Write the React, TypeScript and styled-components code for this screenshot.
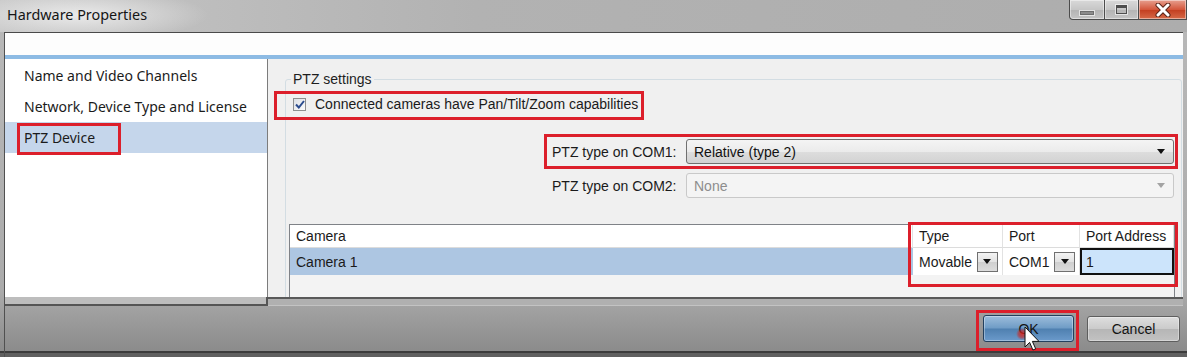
import styled, { createGlobalStyle } from "styled-components";

const GlobalStyle = createGlobalStyle`
  html, body {
    margin: 0;
    padding: 0;
    background: #5e5e5e;
  }
  * {
    box-sizing: border-box;
  }
`;

const UI_FONT = `"Liberation Sans", Arial, sans-serif`;
const SEGOE = `"Noto Sans", "Open Sans", sans-serif`;

const Window = styled.div`
  position: relative;
  width: 1187px;
  height: 357px;
  overflow: hidden;
  display: flex;
  flex-direction: column;
  background: linear-gradient(
    to bottom,
    #b9b9b9 0,
    #ababab 290px,
    #8b8b8b 351px,
    #3c3c3c 351px,
    #3c3c3c 353px,
    #606060 353px
  );
`;

const TitleBar = styled.div`
  height: 32px;
  flex: none;
  display: flex;
  align-items: flex-start;
  background: radial-gradient(
      ellipse 130px 26px at 78px 15px,
      rgba(236, 236, 236, 0.95),
      rgba(236, 236, 236, 0)
    ),
    linear-gradient(to right, #c6c6c6, #b2b2b2 40%, #adadad);
`;

const Title = styled.div`
  font-family: ${SEGOE};
  font-size: 14.4px;
  line-height: 30px;
  color: #151515;
  padding-left: 7px;
`;

const Controls = styled.div`
  margin-left: auto;
  display: flex;
  height: 20px;
`;

const CtrlButton = styled.div<{ $w: number; $close?: boolean; $first?: boolean }>`
  width: ${(p) => p.$w}px;
  height: 20px;
  display: flex;
  align-items: center;
  justify-content: center;
  border: 1px solid #4c4c4c;
  border-top: none;
  border-left-width: ${(p) => (p.$first ? 1 : 0)}px;
  border-bottom-left-radius: ${(p) => (p.$first ? 4 : 0)}px;
  background: ${(p) =>
    p.$close
      ? "linear-gradient(to bottom, #e7a08f, #d4573c 50%, #c23d1f 51%, #d66a48)"
      : "linear-gradient(to bottom, #d9d9d9, #c6c6c6 50%, #b3b3b3 51%, #c4c4c4)"};
  box-shadow: inset 0 0 0 1px rgba(255, 255, 255, 0.45);
`;

const MinGlyph = styled.div`
  width: 14px;
  height: 4px;
  margin-top: 6px;
  background: #8c8c8c;
  border: 1px solid #6e6e6e;
  box-shadow: 0 0 0 1px rgba(255, 255, 255, 0.6);
`;

const MaxGlyph = styled.div`
  width: 11px;
  height: 9px;
  border: 1px solid #4e4e4e;
  border-top-width: 3px;
  box-shadow: 0 0 0 1px rgba(255, 255, 255, 0.6);
`;

const ClientFrame = styled.div`
  flex: 1;
  display: flex;
  flex-direction: column;
  margin: 0 4px;
  border-top: 1px solid #4a4a4a;
  border-left: 1px solid #505050;
`;

const HeaderStrip = styled.div`
  height: 26px;
  flex: none;
  background: #fdfdfd;
  border-bottom: 4px solid #8dbbe4;
`;

const MainRow = styled.div`
  height: 238px;
  flex: none;
  display: flex;
`;

const NavList = styled.div`
  width: 263px;
  flex: none;
  background: #fff;
  border-right: 1px solid #7c7c7c;
  padding-top: 1px;
`;

const NavItem = styled.div<{ $selected?: boolean }>`
  height: 31px;
  display: flex;
  align-items: center;
  padding-left: 19px;
  font-family: ${SEGOE};
  font-size: 14px;
  color: #1b1b1b;
  background: ${(p) => (p.$selected ? "#c5d6eb" : "transparent")};
`;

const SettingsPane = styled.div`
  flex: 1;
  background: #f0f0f0;
  overflow: hidden;
  padding: 12px 1px 0 17px;
  font-family: ${UI_FONT};
  font-size: 14px;
  color: #1a1a1a;
`;

const GroupBox = styled.fieldset`
  margin: 0;
  min-width: 0;
  min-height: 320px;
  border: 1px solid #d3dde3;
  border-radius: 3px;
  padding: 0 7px;
`;

const GroupLegend = styled.legend`
  padding: 0 2px;
  margin-left: -2px;
  line-height: 17px;
  font-size: 14px;
  color: #1e1e1e;
`;

const CheckRow = styled.label`
  margin-top: 8px;
  height: 16px;
  display: flex;
  align-items: center;
  gap: 9px;
`;

const CheckBox = styled.div`
  width: 13px;
  height: 13px;
  border: 1px solid #8e8f8f;
  background: linear-gradient(135deg, #dcdfe4, #fbfbfb);
  display: flex;
  align-items: center;
  justify-content: center;
`;

const ComboRow = styled.div<{ $gap: number }>`
  margin-top: ${(p) => p.$gap}px;
  display: flex;
  align-items: center;
  padding-left: 259px;
`;

const ComboLabel = styled.div`
  width: 134px;
  flex: none;
  white-space: nowrap;
`;

const Combo = styled.div<{ $disabled?: boolean }>`
  flex: 1;
  height: 25px;
  display: flex;
  align-items: center;
  padding: 0 8px 0 7px;
  border: 1px solid ${(p) => (p.$disabled ? "#c9c9c9" : "#707070")};
  border-radius: 3px;
  color: ${(p) => (p.$disabled ? "#8d8d8d" : "#111")};
  background: ${(p) =>
    p.$disabled
      ? "#f4f4f4"
      : "linear-gradient(to bottom, #f4f4f4, #ebebeb 50%, #dddddd 51%, #d2d2d2)"};
  span {
    flex: 1;
  }
`;

const Grid = styled.div`
  margin: 26px -1px 0 -4px;
  height: 110px;
  border: 1px solid #7f8287;
  background: #f3f3f3;
  display: grid;
  grid-template-columns: 623px 90px 77px 1fr;
  grid-template-rows: 23px 27px;
  align-content: start;
`;

const HeadCell = styled.div`
  background: #fff;
  border-bottom: 1px solid #dcdcdc;
  border-right: 1px solid #e2e2e2;
  padding-left: 6px;
  display: flex;
  align-items: center;
  white-space: nowrap;
`;

const Cell = styled.div<{ $tone?: "selected" | "edit" }>`
  display: flex;
  align-items: center;
  gap: 5px;
  padding-left: ${(p) => (p.$tone === "edit" ? 4 : 6)}px;
  white-space: nowrap;
  background: ${(p) =>
    p.$tone === "selected" ? "#adc6e2" : p.$tone === "edit" ? "#cce4fb" : "#fff"};
  border: ${(p) => (p.$tone === "edit" ? "2px solid #111" : "none")};
  border-right: ${(p) => (p.$tone ? "" : "1px solid #e2e2e2")};
`;

const DropButton = styled.div`
  width: 21px;
  height: 20px;
  border: 1px solid #707070;
  background: linear-gradient(to bottom, #f3f3f3, #e2e2e2 50%, #cfcfcf 51%, #dcdcdc);
  display: flex;
  align-items: center;
  justify-content: center;
`;

const FooterEdge = styled.div`
  height: 9px;
  flex: none;
  display: flex;
`;

const NavStub = styled.div`
  width: 263px;
  background: #bdbdbd;
  border-right: 2px solid #555;
  border-bottom: 2px solid #555;
`;

const PaneStub = styled.div`
  flex: 1;
  background: #b0b0b0;
  border-top: 2px solid #595959;
  border-bottom: 1px solid #c3c3c3;
`;

const ButtonBar = styled.div`
  flex: 1;
  display: flex;
  align-items: center;
  justify-content: flex-end;
  gap: 13px;
  padding: 0 3px 6px 0;
`;

const DialogButton = styled.button<{ $primary?: boolean }>`
  width: ${(p) => (p.$primary ? 91 : 93)}px;
  height: ${(p) => (p.$primary ? 27 : 26)}px;
  border-radius: 3px;
  border: 1px solid ${(p) => (p.$primary ? "#23405e" : "#5e5e5e")};
  font-family: ${UI_FONT};
  font-size: 14px;
  color: #141414;
  padding: 0;
  background: ${(p) =>
    p.$primary
      ? "linear-gradient(to bottom, #9dbddb, #6f9cc6 48%, #4f80b0 52%, #6b9acb)"
      : "linear-gradient(to bottom, #dedede, #cbcbcb 48%, #b6b6b6 52%, #c2c2c2)"};
  box-shadow: inset 0 0 0 1px rgba(255, 255, 255, 0.35);
`;

const Annotation = styled.div<{ $x: number; $y: number; $w: number; $h: number }>`
  position: absolute;
  left: ${(p) => p.$x}px;
  top: ${(p) => p.$y}px;
  width: ${(p) => p.$w}px;
  height: ${(p) => p.$h}px;
  border: 3px solid #dc1f2b;
  pointer-events: none;
`;

const Pointer = styled.div`
  position: absolute;
  left: 1012px;
  top: 319px;
  width: 30px;
  height: 40px;
  pointer-events: none;
`;

const Arrow = () => (
  <svg width="8" height="5" viewBox="0 0 8 5">
    <path d="M0 0h8L4 5z" fill="#111" />
  </svg>
);

export default function App() {
  return (
    <>
      <GlobalStyle />
      <Window>
        <TitleBar>
          <Title>Hardware Properties</Title>
          <Controls>
            <CtrlButton $w={36} $first>
              <MinGlyph />
            </CtrlButton>
            <CtrlButton $w={34}>
              <MaxGlyph />
            </CtrlButton>
            <CtrlButton $w={48} $close>
              <svg width="16" height="14" viewBox="0 0 16 14">
                <path
                  d="M3 2l10 10M13 2L3 12"
                  stroke="#5a2418"
                  strokeWidth="5"
                  strokeLinecap="round"
                />
                <path
                  d="M3 2l10 10M13 2L3 12"
                  stroke="#fff"
                  strokeWidth="3"
                  strokeLinecap="round"
                />
              </svg>
            </CtrlButton>
          </Controls>
        </TitleBar>

        <ClientFrame>
          <HeaderStrip />
          <MainRow>
            <NavList>
              <NavItem>Name and Video Channels</NavItem>
              <NavItem>Network, Device Type and License</NavItem>
              <NavItem $selected>PTZ Device</NavItem>
            </NavList>

            <SettingsPane>
              <GroupBox>
                <GroupLegend>PTZ settings</GroupLegend>
                <CheckRow>
                  <CheckBox>
                    <svg width="10" height="9" viewBox="0 0 10 9">
                      <path
                        d="M1 4.5l2.8 3L9 1"
                        stroke="#2a4b8d"
                        strokeWidth="2"
                        fill="none"
                      />
                    </svg>
                  </CheckBox>
                  Connected cameras have Pan/Tilt/Zoom capabilities
                </CheckRow>

                <ComboRow $gap={27}>
                  <ComboLabel>PTZ type on COM1:</ComboLabel>
                  <Combo>
                    <span>Relative (type 2)</span>
                    <Arrow />
                  </Combo>
                </ComboRow>
                <ComboRow $gap={9}>
                  <ComboLabel>PTZ type on COM2:</ComboLabel>
                  <Combo $disabled>
                    <span>None</span>
                    <svg width="8" height="5" viewBox="0 0 8 5">
                      <path d="M0 0h8L4 5z" fill="#a3a3a3" />
                    </svg>
                  </Combo>
                </ComboRow>

                <Grid>
                  <HeadCell>Camera</HeadCell>
                  <HeadCell>Type</HeadCell>
                  <HeadCell>Port</HeadCell>
                  <HeadCell>Port Address</HeadCell>

                  <Cell $tone="selected">Camera 1</Cell>
                  <Cell>
                    Movable
                    <DropButton>
                      <Arrow />
                    </DropButton>
                  </Cell>
                  <Cell>
                    COM1
                    <DropButton>
                      <Arrow />
                    </DropButton>
                  </Cell>
                  <Cell $tone="edit">1</Cell>
                </Grid>
              </GroupBox>
            </SettingsPane>
          </MainRow>

          <FooterEdge>
            <NavStub />
            <PaneStub />
          </FooterEdge>
          <ButtonBar>
            <DialogButton $primary>OK</DialogButton>
            <DialogButton>Cancel</DialogButton>
          </ButtonBar>
        </ClientFrame>

        <Annotation $x={17} $y={123} $w={104} $h={32} />
        <Annotation $x={274} $y={91} $w={370} $h={29} />
        <Annotation $x={544} $y={134} $w={634} $h={35} />
        <Annotation $x={908} $y={222} $w={270} $h={65} />
        <Annotation $x={976} $y={310} $w={103} $h={41} />

        <Pointer>
          <svg width="30" height="40" viewBox="0 0 30 40">
            <defs>
              <radialGradient id="clickDot">
                <stop offset="0" stopColor="#e3261f" stopOpacity="0.85" />
                <stop offset="0.55" stopColor="#d0221c" stopOpacity="0.6" />
                <stop offset="1" stopColor="#d0221c" stopOpacity="0" />
              </radialGradient>
            </defs>
            <circle cx="10" cy="15" r="6" fill="url(#clickDot)" />
            <path
              d="M13 8v20l4.6-4.6 3.3 7.6 2.8-1.2-3.3-7.4h6.6z"
              fill="#fff"
              stroke="#111"
              strokeWidth="1"
              strokeLinejoin="round"
            />
          </svg>
        </Pointer>
      </Window>
    </>
  );
}
